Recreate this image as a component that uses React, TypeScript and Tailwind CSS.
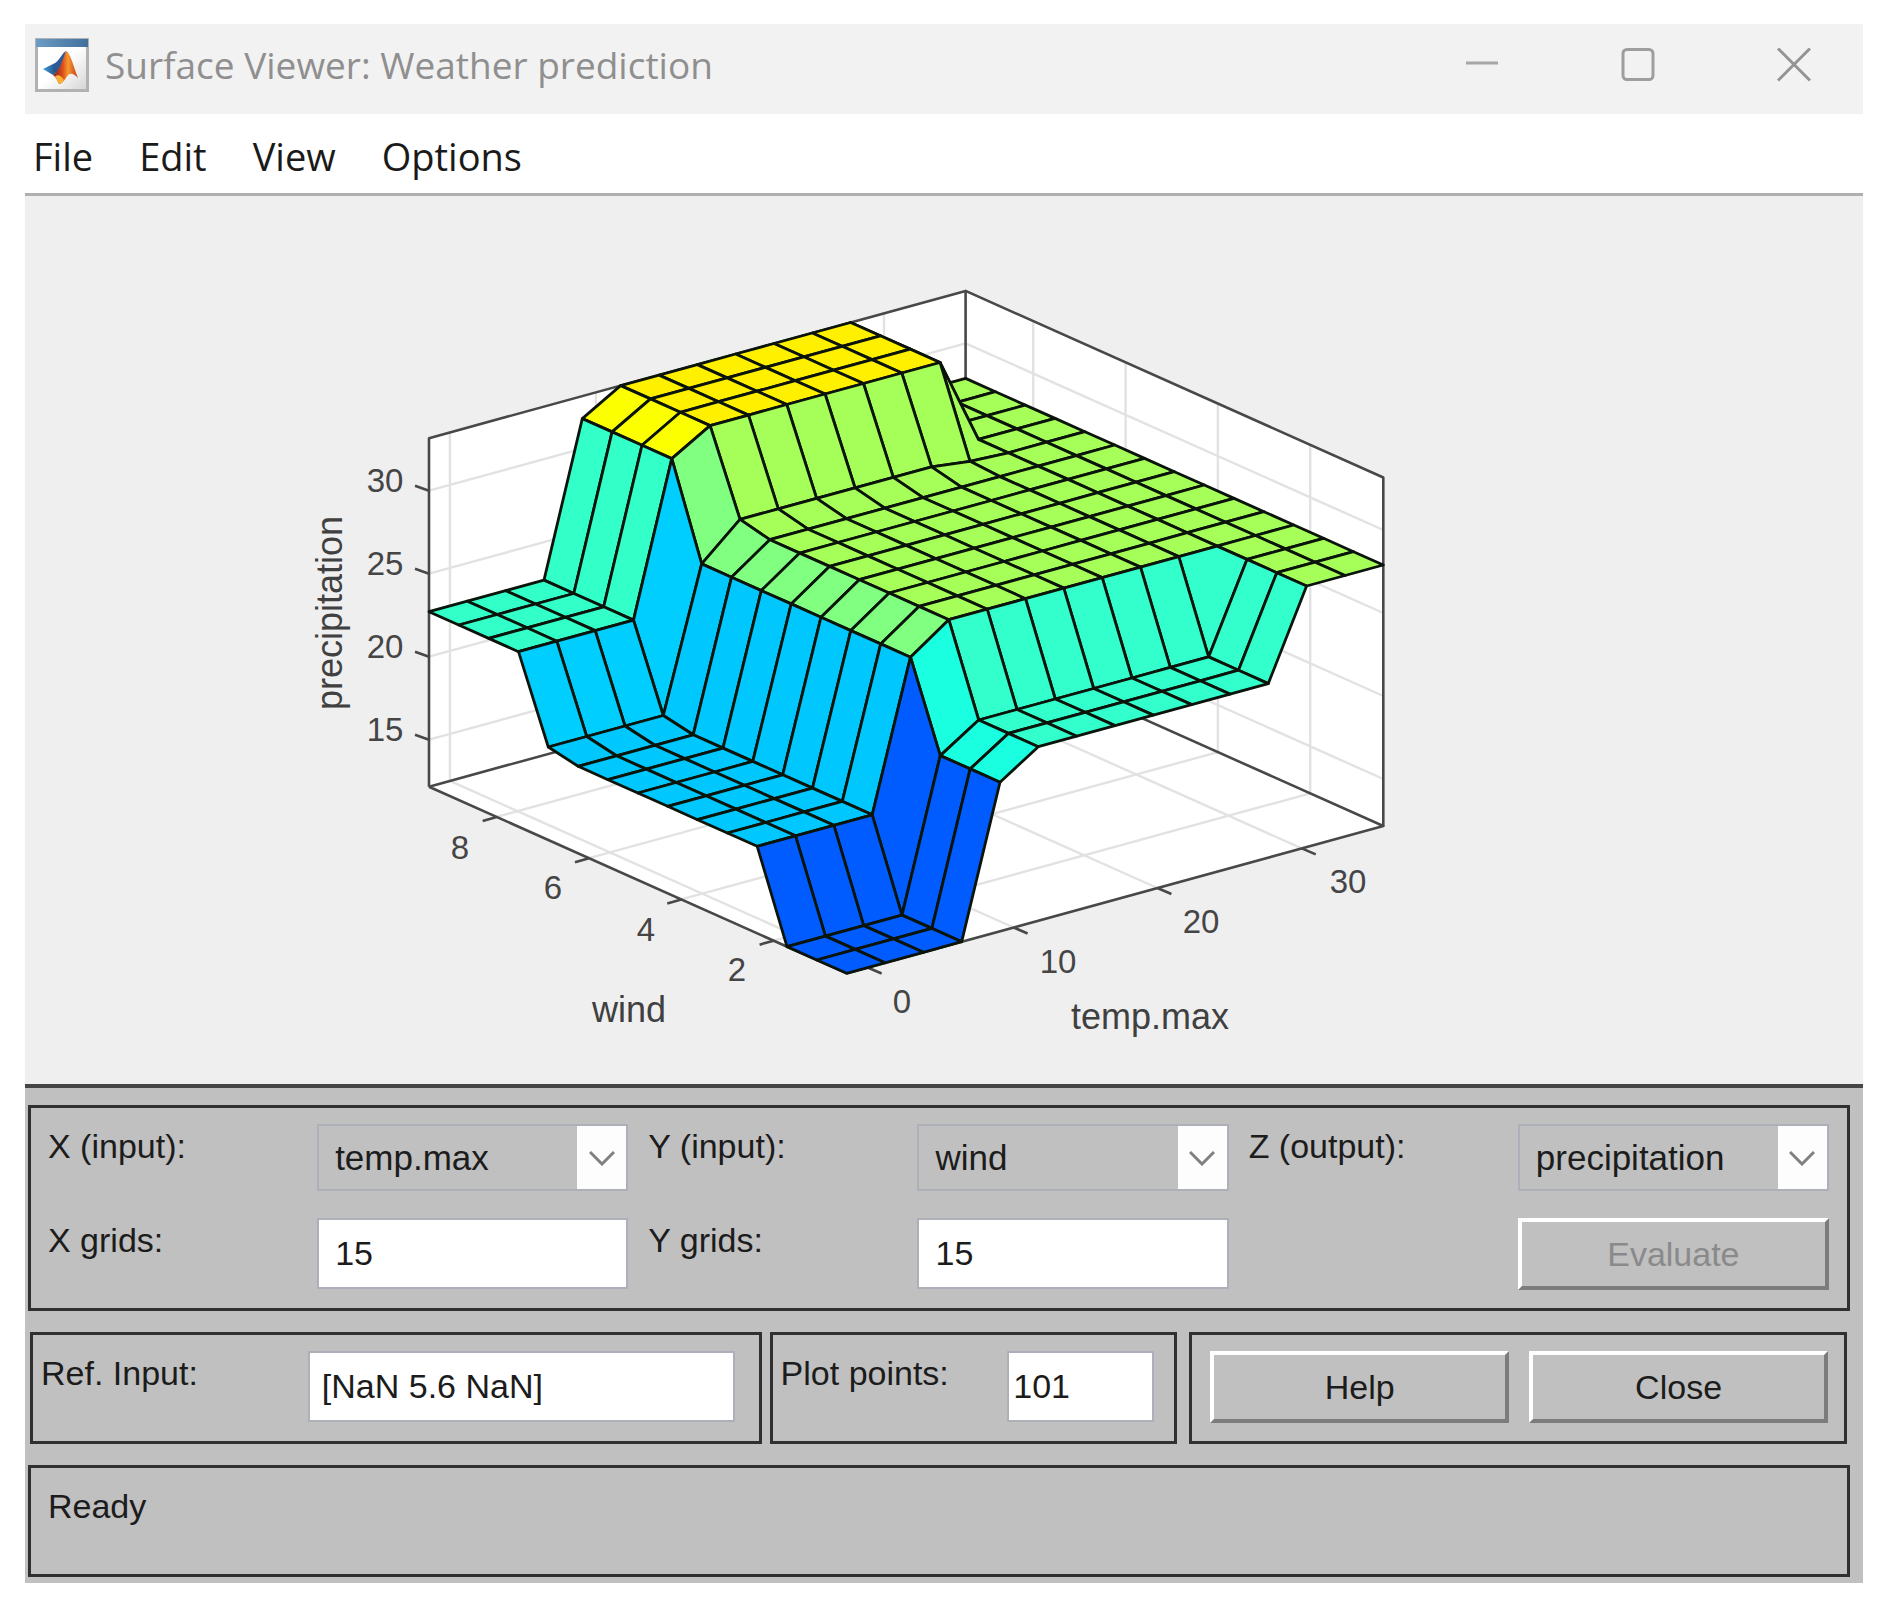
import React from "react";

const STEPS = 14;
const FRONT = { x: 846.7, y: 972.3 };
const LEFT = { x: 429, y: 785.7 };
const RIGHT = { x: 1383.3, y: 825 };
const BACK = { x: 965.6, y: 638.4 };
const BOX_HEIGHT = 348.5;

type Point = [number, number];

// Row = temp.max band, column = wind band (0-2, 3-9, 10, 11-14).
const HEIGHTS = [
  [0, 87, 93, 175],
  [149, 234, 234, 326],
  [174, 261, 268, 348.5],
  [261, 261, 261, 261],
];
const COLORS = [
  ["#005cff", "#00c8ff", "#00ceff", "#33ffc8"],
  ["#1affe0", "#80ff80", "#80ff80", "#fbff00"],
  ["#33ffcc", "#a6ff59", "#a6ff59", "#fff000"],
  ["#a6ff59", "#a6ff59", "#a6ff59", "#a6ff59"],
];

const tempBand = (i: number) => (i <= 3 ? 0 : i === 4 ? 1 : i <= 11 ? 2 : 3);
const windBand = (j: number) => (j <= 2 ? 0 : j <= 9 ? 1 : j === 10 ? 2 : 3);

function floorPoint(u: number, v: number): Point {
  return [
    FRONT.x + (RIGHT.x - FRONT.x) * u + (LEFT.x - FRONT.x) * v,
    FRONT.y + (RIGHT.y - FRONT.y) * u + (LEFT.y - FRONT.y) * v,
  ];
}

function vertex(i: number, j: number): Point {
  const [x, y] = floorPoint(i / STEPS, j / STEPS);
  const h = i === 11 && j === 10 ? 263 : HEIGHTS[tempBand(i)][windBand(j)];
  return [x, y - h];
}

const toPoints = (pts: Point[]) => pts.map(([x, y]) => `${x.toFixed(1)},${y.toFixed(1)}`).join(" ");

function surfaceFaces() {
  const faces: { key: string; points: string; fill: string }[] = [];
  for (let i = STEPS - 1; i >= 0; i--) {
    for (let j = STEPS - 1; j >= 0; j--) {
      faces.push({
        key: `${i}-${j}`,
        points: toPoints([vertex(i, j), vertex(i + 1, j), vertex(i + 1, j + 1), vertex(i, j + 1)]),
        fill: COLORS[tempBand(i)][windBand(j)],
      });
    }
  }
  return faces;
}

const TEMP_TICKS = [
  { t: 0.039, label: "0", x: 902, y: 1012 },
  { t: 0.311, label: "10", x: 1058, y: 972 },
  { t: 0.579, label: "20", x: 1201, y: 932 },
  { t: 0.848, label: "30", x: 1348, y: 892 },
];
const WIND_TICKS = [
  { t: 0.175, label: "2", x: 737, y: 980 },
  { t: 0.396, label: "4", x: 646, y: 940 },
  { t: 0.617, label: "6", x: 553, y: 898 },
  { t: 0.838, label: "8", x: 460, y: 858 },
];
const Z_TICKS = [
  { h: 47, label: "15" },
  { h: 130, label: "20" },
  { h: 213, label: "25" },
  { h: 296, label: "30" },
];

function Line({ a, b }: { a: Point; b: Point }) {
  return <line x1={a[0]} y1={a[1]} x2={b[0]} y2={b[1]} />;
}

function SurfacePlot() {
  const front: Point = [FRONT.x, FRONT.y];
  const left: Point = [LEFT.x, LEFT.y];
  const right: Point = [RIGHT.x, RIGHT.y];
  const back: Point = [BACK.x, BACK.y];
  const up = (p: Point, h = BOX_HEIGHT): Point => [p[0], p[1] - h];

  return (
    <svg
      viewBox="25 197 1838 886"
      className="block h-auto w-full"
      role="img"
      aria-label="Surface plot of precipitation over temp.max and wind"
      fontFamily='"Liberation Sans", Arial, sans-serif'
    >
      <polygon fill="#fff" points={toPoints([left, up(left), up(back), up(right), right, front])} />
      <g stroke="#e2e2e2" strokeWidth="2.4">
        {TEMP_TICKS.map(({ t, label }) => (
          <g key={label}>
            <Line a={floorPoint(t, 0)} b={floorPoint(t, 1)} />
            <Line a={floorPoint(t, 1)} b={up(floorPoint(t, 1))} />
          </g>
        ))}
        {WIND_TICKS.map(({ t, label }) => (
          <g key={label}>
            <Line a={floorPoint(0, t)} b={floorPoint(1, t)} />
            <Line a={floorPoint(1, t)} b={up(floorPoint(1, t))} />
          </g>
        ))}
        {Z_TICKS.map(({ h, label }) => (
          <g key={label}>
            <Line a={up(left, h)} b={up(back, h)} />
            <Line a={up(back, h)} b={up(right, h)} />
          </g>
        ))}
      </g>
      <g stroke="#484848" strokeWidth="2.6" fill="none" strokeLinejoin="round">
        <polyline points={toPoints([left, up(left), up(back), up(right), right])} />
        <polyline points={toPoints([left, front, right, back, left])} />
        <Line a={back} b={up(back)} />
        {TEMP_TICKS.map(({ t, label }) => {
          const p = floorPoint(t, 0);
          return <Line key={label} a={p} b={[p[0] + 14, p[1] + 6]} />;
        })}
        {WIND_TICKS.map(({ t, label }) => {
          const p = floorPoint(0, t);
          return <Line key={label} a={p} b={[p[0] - 14, p[1] + 4]} />;
        })}
        {Z_TICKS.map(({ h, label }) => {
          const p = up(left, h);
          return <Line key={label} a={p} b={[p[0] - 14, p[1] - 5]} />;
        })}
      </g>
      <g stroke="#0a140a" strokeWidth="2.8" strokeLinejoin="round">
        {surfaceFaces().map((face) => (
          <polygon key={face.key} points={face.points} fill={face.fill} />
        ))}
      </g>
      <g fill="#454545" fontSize="33" textAnchor="middle">
        {[...TEMP_TICKS, ...WIND_TICKS].map(({ label, x, y }) => (
          <text key={label} x={x} y={y}>
            {label}
          </text>
        ))}
        {Z_TICKS.map(({ h, label }) => (
          <text key={label} x="385" y={787 - h}>
            {label}
          </text>
        ))}
      </g>
      <g fill="#404040" fontSize="36" textAnchor="middle">
        <text x="629" y="1021">wind</text>
        <text x="1150" y="1028">temp.max</text>
        <text transform="translate(342 612) rotate(-90)">precipitation</text>
      </g>
    </svg>
  );
}

function MatlabIcon() {
  return (
    <svg viewBox="0 0 54 54" className="size-[54px] shrink-0" aria-hidden="true">
      <defs>
        <linearGradient id="page" x1="0" y1="0" x2="1" y2="1">
          <stop offset="0.5" stopColor="#ffffff" />
          <stop offset="1" stopColor="#d4d4d4" />
        </linearGradient>
        <linearGradient id="bar" x1="0" y1="0" x2="1" y2="0">
          <stop offset="0" stopColor="#6d9cc4" />
          <stop offset="1" stopColor="#40709c" />
        </linearGradient>
        <linearGradient id="wing" x1="0" y1="0" x2="1" y2="0">
          <stop offset="0" stopColor="#3fa0dc" />
          <stop offset="1" stopColor="#203a6c" />
        </linearGradient>
        <linearGradient id="flame" x1="0" y1="0" x2="1" y2="0">
          <stop offset="0" stopColor="#7c1c20" />
          <stop offset="0.4" stopColor="#e0501c" />
          <stop offset="0.6" stopColor="#f59a30" />
          <stop offset="1" stopColor="#c83818" />
        </linearGradient>
      </defs>
      <rect x="1.5" y="1.5" width="51" height="51" fill="url(#page)" stroke="#b0b2b4" strokeWidth="3" />
      <rect x="1" y="1" width="52" height="8" fill="url(#bar)" />
      <path d="M8 31 L18 26 L24 32 L18 37 Z" fill="url(#wing)" />
      <path d="M18 26 C24 24 27 15 31 13 L27 30 L22 36 Z" fill="#2a5a98" />
      <path d="M31 13 C35 14 38 27 43 40 C37 34 34 35 31 40 C28 44 26 46 24 46 C22 42 21 39 18 37 C25 33 28 20 31 13 Z" fill="url(#flame)" />
      <path d="M20 38 C24 36 26 38 29 42 C27 45 26 46 24 46 Z" fill="#f9b233" />
    </svg>
  );
}

const TITLE_BUTTON = "flex w-[138px] items-center justify-center";

function TitleBar() {
  return (
    <header className="flex h-[90px] items-center bg-[#f2f2f2] pb-2 pl-[10px]">
      <MatlabIcon />
      <h1 className="ml-4 flex-1 whitespace-nowrap font-['Open_Sans','Noto_Sans',sans-serif] text-[37px] leading-[48px] text-[#8f8f8f]">
        Surface Viewer: Weather prediction
      </h1>
      <div className="flex gap-[18px]">
        <button type="button" aria-label="Minimize" className={TITLE_BUTTON}>
          <svg viewBox="0 0 34 34" className="size-[34px]" stroke="#a6a6a6" strokeWidth="3">
            <path d="M1 15 H33" />
          </svg>
        </button>
        <button type="button" aria-label="Maximize" className={TITLE_BUTTON}>
          <svg viewBox="0 0 34 34" className="size-[34px]" stroke="#9e9e9e" strokeWidth="3" fill="none">
            <rect x="2" y="1.5" width="30" height="30" rx="4" />
          </svg>
        </button>
        <button type="button" aria-label="Close window" className={TITLE_BUTTON}>
          <svg viewBox="0 0 34 34" className="size-[34px]" stroke="#949494" strokeWidth="3">
            <path d="M1 0.5 L33 32.5 M33 0.5 L1 32.5" />
          </svg>
        </button>
      </div>
    </header>
  );
}

function MenuBar() {
  return (
    <nav className="flex h-[79px] items-center gap-[46px] bg-white pt-1 pl-2 font-['Open_Sans','Noto_Sans',sans-serif] text-[38px] leading-[48px] text-[#1a1a1a]">
      {["File", "Edit", "View", "Options"].map((item) => (
        <button key={item} type="button">
          {item}
        </button>
      ))}
    </nav>
  );
}

const LABEL = "whitespace-nowrap pt-[2px] leading-10";
const TEXT_BOX = "block h-[71px] w-full min-w-0 border-2 border-[#adb0b8] bg-white";
const PUSH_BUTTON =
  "h-[72px] w-full border-4 border-t-white border-l-white border-r-[#7c7c7c] border-b-[#7c7c7c] bg-[#c0c0c0]";
const PANEL = "border-3 border-[#303030]";

function AxisSelect({ id, label, value }: { id: string; label: string; value: string }) {
  return (
    <>
      <label htmlFor={id} className={LABEL}>
        {label}
      </label>
      <div className="relative">
        <select
          id={id}
          defaultValue={value}
          className="block h-[67px] w-full appearance-none border-2 border-[#adb0b8] bg-[#c0c0c0] pl-4 text-[35px]"
        >
          <option>temp.max</option>
          <option>wind</option>
          <option>precipitation</option>
        </select>
        <span className="pointer-events-none absolute inset-y-[2px] right-[2px] flex w-[49px] items-center justify-center bg-[#fdfdfd]">
          <svg viewBox="0 0 26 16" className="h-4 w-[26px]" fill="none" stroke="#808080" strokeWidth="3">
            <path d="M1 2 L13 14 L25 2" />
          </svg>
        </span>
      </div>
    </>
  );
}

function GridInput({ id, label }: { id: string; label: string }) {
  return (
    <>
      <label htmlFor={id} className={LABEL}>
        {label}
      </label>
      <input id={id} type="text" defaultValue="15" className={`${TEXT_BOX} pl-4`} />
    </>
  );
}

const AXIS_GROUP = "grid grid-cols-[269fr_311fr] content-start gap-y-[27px]";

function Controls() {
  return (
    <section className="border-t-4 border-[#454545] bg-[#c0c0c0] pt-[17px] pb-[6px] font-['Liberation_Sans',Arial,sans-serif] text-[34px] leading-10 text-[#1c1c1c]">
      <div className={`${PANEL} mr-[13px] ml-[3px] grid h-[206px] grid-cols-3 gap-x-5 pt-4 pr-[18px] pl-[17px]`}>
        <div className={AXIS_GROUP}>
          <AxisSelect id="x-axis" label="X (input):" value="temp.max" />
          <GridInput id="x-grids" label="X grids:" />
        </div>
        <div className={AXIS_GROUP}>
          <AxisSelect id="y-axis" label="Y (input):" value="wind" />
          <GridInput id="y-grids" label="Y grids:" />
        </div>
        <div className={AXIS_GROUP}>
          <AxisSelect id="z-axis" label="Z (output):" value="precipitation" />
          <button type="button" disabled className={`${PUSH_BUTTON} col-start-2 text-[#8a8a8a]`}>
            Evaluate
          </button>
        </div>
      </div>

      <div className="mt-[21px] mr-4 ml-[5px] grid grid-cols-[732fr_408fr_662fr] gap-x-2">
        <div className={`${PANEL} grid h-[112px] grid-cols-[267fr_427fr] pt-4 pr-6 pl-2`}>
          <label htmlFor="ref-input" className={LABEL}>
            Ref. Input:
          </label>
          <input id="ref-input" type="text" defaultValue="[NaN 5.6 NaN]" className={`${TEXT_BOX} pl-3`} />
        </div>
        <div className={`${PANEL} grid h-[112px] grid-cols-[228fr_148fr] pt-4 pr-5 pl-2`}>
          <label htmlFor="plot-points" className={LABEL}>
            Plot points:
          </label>
          <input id="plot-points" type="text" defaultValue="101" className={`${TEXT_BOX} pl-1`} />
        </div>
        <div className={`${PANEL} ml-1 grid h-[112px] grid-cols-2 gap-x-5 pt-4 pr-4 pl-[18px]`}>
          <button type="button" className={PUSH_BUTTON}>
            Help
          </button>
          <button type="button" className={PUSH_BUTTON}>
            Close
          </button>
        </div>
      </div>

      <div role="status" className={`${PANEL} mt-[21px] mr-[13px] ml-[3px] h-[112px] pt-[18px] pl-[17px]`}>
        Ready
      </div>
    </section>
  );
}

export default function App() {
  return (
    <div className="min-h-screen bg-white pt-6 pr-6 pb-6 pl-[25px]">
      <main>
        <TitleBar />
        <MenuBar />
        <div className="border-t-3 border-[#b0b0b0] bg-[#efefef] pt-[2px]">
          <SurfacePlot />
        </div>
        <Controls />
      </main>
    </div>
  );
}
